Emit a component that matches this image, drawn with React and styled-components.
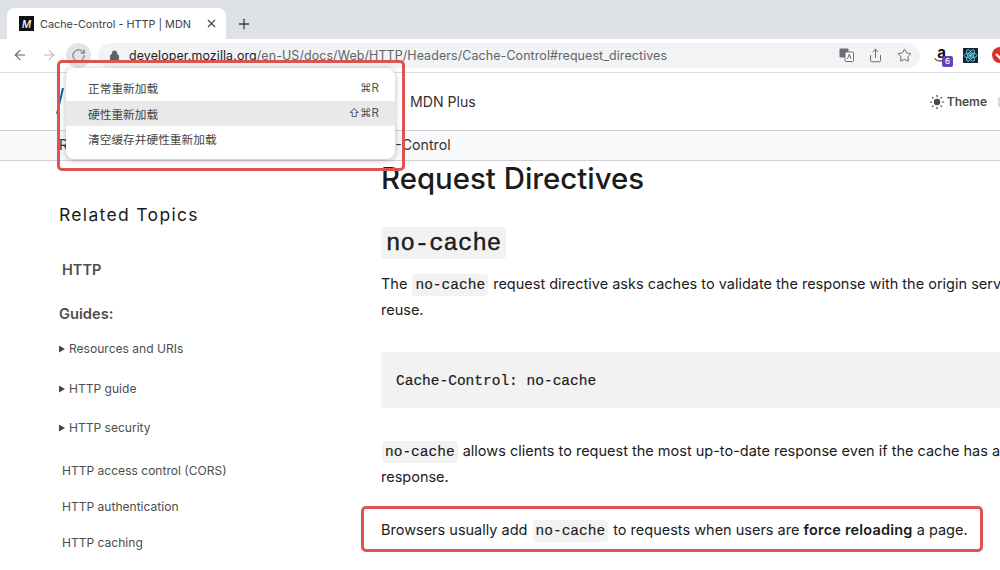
import React from "react";
import styled, { createGlobalStyle } from "styled-components";
import { ArrowLeft, ArrowRight, RotateCw, Lock, Share, Star, X, Plus, Sun } from "lucide-react";

const Global = createGlobalStyle`
  html, body { margin: 0; padding: 0; background: #fff; }
  * { box-sizing: border-box; }
  body { font-family: Inter, "Noto Sans CJK SC", sans-serif; color: #1b1b1b; }
`;

const Page = styled.div`
  position: relative;
  width: 1000px;
  height: 570px;
  overflow: hidden;
  background: #fff;
`;

const TabStrip = styled.div`
  height: 39px;
  background: #dee1e6;
  display: flex;
  align-items: flex-end;
  padding-left: 7px;
`;

const Tab = styled.div`
  width: 219px;
  height: 31px;
  background: #fff;
  border-radius: 8px 8px 0 0;
  display: flex;
  align-items: center;
  padding: 0 8px 0 12px;
  font-size: 10.85px;
  color: #3c4043;
`;

const Favicon = styled.div`
  width: 15px;
  height: 15px;
  background: #111;
  color: #fff;
  font-size: 10px;
  font-weight: 500;
  font-style: italic;
  display: flex;
  align-items: center;
  justify-content: center;
  margin-right: 6px;
`;

const TabTitle = styled.span`
  flex: 1;
  white-space: nowrap;
`;

const NewTab = styled.div`
  margin: 0 0 7px 10px;
  display: flex;
  color: #3c4043;
`;

const Toolbar = styled.div`
  height: 34px;
  display: flex;
  align-items: center;
  padding: 0 0 1px 12px;
  border-bottom: 1px solid #dcdde0;
  overflow: hidden;
`;

const NavButton = styled.div`
  width: 16px;
  flex-shrink: 0;
  display: flex;
  justify-content: center;
  margin-right: ${(p) => p.$gap}px;
  color: ${(p) => p.$color};
`;

const ReloadButton = styled.div`
  width: 25px;
  height: 25px;
  flex-shrink: 0;
  border-radius: 50%;
  background: #e3e4e6;
  color: #5f6368;
  display: flex;
  align-items: center;
  justify-content: center;
  margin-right: 7px;
`;

const AddressBar = styled.div`
  width: 822px;
  height: 25px;
  border-radius: 13px;
  background: #f1f3f4;
  display: flex;
  align-items: center;
  padding: 0 8px 0 11px;
  color: #5f6368;
  flex-shrink: 0;
`;

const Url = styled.div`
  flex: 1;
  margin-left: 9px;
  font-size: 12.45px;
  letter-spacing: 0.1px;
  white-space: nowrap;
  color: #5f6368;
`;

const Host = styled.span`
  color: #202124;
`;

const AddressIcons = styled.div`
  display: flex;
  align-items: center;
  gap: 14px;
`;

const TranslateIcon = styled.div`
  width: 15px;
  height: 14px;
  display: flex;
`;

const Extensions = styled.div`
  display: flex;
  align-items: center;
  margin-left: 14px;
  gap: 14px;
  flex-shrink: 0;
`;

const AmazonIcon = styled.div`
  position: relative;
  width: 15px;
  height: 22px;
  flex-shrink: 0;
  font-size: 15px;
  font-weight: 700;
  line-height: 17px;
  text-align: center;
  color: #111;
`;

const Smile = styled.svg`
  position: absolute;
  left: 0;
  top: 13px;
`;

const Badge = styled.span`
  position: absolute;
  left: 8px;
  top: 12px;
  width: 11px;
  height: 11px;
  background: #6741b8;
  border-radius: 2px;
  color: #fff;
  font-size: 8px;
  line-height: 11px;
  font-weight: 500;
`;

const ReactIcon = styled.div`
  width: 15px;
  height: 15px;
  flex-shrink: 0;
  background: #16242c;
  display: flex;
`;

const RedIcon = styled.div`
  width: 16px;
  height: 16px;
  flex-shrink: 0;
  display: flex;
`;

const SiteNav = styled.div`
  height: 58px;
  border-bottom: 1px solid #d0d0d4;
  display: flex;
  align-items: center;
  padding-left: 410px;
  font-size: 14.1px;
  color: #333;
`;

const NavLink = styled.span`
  flex: 1;
  white-space: nowrap;
`;

const ThemeButton = styled.div`
  display: flex;
  align-items: center;
  gap: 2px;
  margin-right: 11px;
  font-size: 12px;
  font-weight: 600;
  color: #4a4a4a;
`;

const ClippedButton = styled.div`
  width: 2px;
  height: 10px;
  background: #dcdcdc;
`;

const Logo = styled.svg`
  position: absolute;
  left: 56px;
  top: 88px;
`;

const Crumbs = styled.div`
  height: 30px;
  padding-bottom: 2px;
  background: #f8f9fa;
  border-bottom: 1px solid #d0d0d4;
  display: flex;
  align-items: center;
  font-size: 14.2px;
  color: #333;
  padding-left: 59px;
  white-space: nowrap;
`;

const CrumbTail = styled.span`
  margin-left: 327px;
`;

const Columns = styled.div`
  display: flex;
`;

const Sidebar = styled.aside`
  width: 381px;
  flex-shrink: 0;
  padding: 43px 0 0 59px;
  color: #4e4e4e;
`;

const SideTitle = styled.div`
  font-size: 17.5px;
  line-height: 22px;
  letter-spacing: 1.33px;
  color: #1b1b1b;
  margin-bottom: 34px;
`;

const SideHeading = styled.div`
  font-size: ${(p) => p.$size}px;
  font-weight: 600;
  line-height: 20px;
  padding-left: ${(p) => p.$indent}px;
  margin-bottom: ${(p) => p.$after}px;
`;

const SideItem = styled.div`
  display: flex;
  align-items: center;
  font-size: 12.05px;
  line-height: 18px;
  height: 18px;
  padding-left: ${(p) => (p.$arrow ? 0 : 3)}px;
  margin-bottom: ${(p) => p.$after}px;
  white-space: nowrap;
`;

const Arrow = styled.span`
  flex-shrink: 0;
  width: 6px;
  height: 7px;
  background: #444;
  clip-path: polygon(0 0, 100% 50%, 0 100%);
  margin-right: 4px;
`;

const Content = styled.main`
  flex: 1;
  min-width: 0;
  overflow: hidden;
  white-space: nowrap;
`;

const Title = styled.h1`
  margin: 0 0 31px;
  font-size: 29.4px;
  line-height: 35px;
  font-weight: 500;
  color: #1b1b1b;
`;

const SectionCode = styled.h2`
  display: inline-block;
  margin: 0 0 12px;
  padding: 0 5px;
  height: 32px;
  background: #f2f2f2;
  border-radius: 4px;
  font-family: "Liberation Mono", monospace;
  font-size: 24px;
  line-height: 33px;
  font-weight: 400;
  -webkit-text-stroke: 0.4px #1b1b1b;
`;

const Text = styled.p`
  margin: 0;
  font-size: 14.5px;
  line-height: 26px;
  color: #1b1b1b;
`;

const Code = styled.code`
  padding: 3px 3px;
  margin: 0 1px;
  line-height: 1;
  background: #f2f2f2;
  border-radius: 4px;
  font-family: "Liberation Mono", monospace;
  font-size: 14.5px;
  -webkit-text-stroke: 0.15px #1b1b1b;
`;

const CodeBlock = styled.pre`
  margin: 29px 0 30px;
  height: 56px;
  padding-left: 15px;
  background: #f2f2f2;
  border-radius: 4px 0 0 4px;
  font-family: "Liberation Mono", monospace;
  font-size: 14.5px;
  line-height: 58px;
  color: #1b1b1b;
  -webkit-text-stroke: 0.2px #1b1b1b;
`;

const LastText = styled(Text)`
  margin-top: 27px;
`;

const Strong = styled.strong`
  font-weight: 600;
  letter-spacing: 0.2px;
`;

const ReloadMenu = styled.div`
  position: absolute;
  left: 66px;
  top: 68px;
  width: 329px;
  height: 91px;
  padding-top: 7px;
  background: #fff;
  border-radius: 8px;
  box-shadow: 0 1px 6px rgba(0, 0, 0, 0.28);
`;

const MenuRow = styled.div`
  height: 25.5px;
  display: flex;
  align-items: center;
  justify-content: space-between;
  padding: 0 16px 0 22px;
  font-size: 11.7px;
  color: #444;
  background: ${(p) => (p.$active ? "#e9e9e9" : "transparent")};
`;

const Shortcut = styled.span`
  font-size: 11.5px;
  color: #555;
`;

const Callout = styled.div`
  position: absolute;
  left: ${(p) => p.$left}px;
  top: ${(p) => p.$top}px;
  width: ${(p) => p.$width}px;
  height: ${(p) => p.$height}px;
  border: 3.5px solid #dd5350;
  border-radius: 5px;
  pointer-events: none;
`;

const guides = [
  { label: "Resources and URIs", after: 22 },
  { label: "HTTP guide", after: 21 },
  { label: "HTTP security", after: 25 },
];

const links = [
  { label: "HTTP access control (CORS)", after: 18 },
  { label: "HTTP authentication", after: 18 },
  { label: "HTTP caching", after: 0 },
];

const menuItems = [
  { label: "正常重新加载", keys: "⌘R" },
  { label: "硬性重新加载", keys: "⇧⌘R", active: true },
  { label: "清空缓存并硬性重新加载", keys: "" },
];

export default function App() {
  return (
    <Page>
      <Global />
      <TabStrip>
        <Tab>
          <Favicon>M</Favicon>
          <TabTitle>Cache-Control - HTTP | MDN</TabTitle>
          <X size={13} strokeWidth={2} />
        </Tab>
        <NewTab>
          <Plus size={16} strokeWidth={2} />
        </NewTab>
      </TabStrip>
      <Toolbar>
        <NavButton $gap={13} $color="#5f6368">
          <ArrowLeft size={16} strokeWidth={1.6} />
        </NavButton>
        <NavButton $gap={9} $color="#b9bcc0">
          <ArrowRight size={16} strokeWidth={1.6} />
        </NavButton>
        <ReloadButton>
          <RotateCw size={15} strokeWidth={1.6} />
        </ReloadButton>
        <AddressBar>
          <Lock size={11} fill="#5f6368" />
          <Url>
            <Host>developer.mozilla.org</Host>/en-US/docs/Web/HTTP/Headers/Cache-Control#request_directives
          </Url>
          <AddressIcons>
            <TranslateIcon>
              <svg width="15" height="14" viewBox="0 0 15 14">
                <rect x="0.5" y="0.5" width="9" height="9" rx="1" fill="#6b6f74" />
                <rect x="6" y="4" width="8.5" height="9.5" rx="1" fill="#fff" stroke="#6b6f74" />
                <path d="M8.5 11l1.8-5 1.8 5" fill="none" stroke="#6b6f74" />
              </svg>
            </TranslateIcon>
            <Share size={15} strokeWidth={1.5} />
            <Star size={15} strokeWidth={1.5} />
          </AddressIcons>
        </AddressBar>
        <Extensions>
          <AmazonIcon>
            a
            <Smile width="10" height="6" viewBox="0 0 10 6">
              <path d="M0.5 1.5C3 4 6 4.5 9 3.5" fill="none" stroke="#111" strokeWidth="1" />
            </Smile>
            <Badge>6</Badge>
          </AmazonIcon>
          <ReactIcon>
            <svg width="15" height="15" viewBox="0 0 14 14" fill="none" stroke="#61dafb" strokeWidth="0.8">
              <ellipse cx="7" cy="7" rx="6" ry="2.4" />
              <ellipse cx="7" cy="7" rx="6" ry="2.4" transform="rotate(60 7 7)" />
              <ellipse cx="7" cy="7" rx="6" ry="2.4" transform="rotate(120 7 7)" />
              <circle cx="7" cy="7" r="1.1" fill="#61dafb" />
            </svg>
          </ReactIcon>
          <RedIcon>
            <svg width="16" height="16" viewBox="0 0 16 16">
              <circle cx="8" cy="8" r="8" fill="#d93025" />
              <path d="M4 7l4 4 4-6" fill="none" stroke="#fff" strokeWidth="2.4" />
            </svg>
          </RedIcon>
        </Extensions>
      </Toolbar>
      <SiteNav>
        <NavLink>MDN Plus</NavLink>
        <ThemeButton>
          <Sun size={16} fill="#4a4a4a" strokeWidth={1.6} />
          Theme
        </ThemeButton>
        <ClippedButton />
      </SiteNav>
      <Logo width="8" height="26" viewBox="0 0 8 26">
        <path d="M7 0L1 26" stroke="#1f5fae" strokeWidth="2" />
      </Logo>
      <Crumbs>
        R<CrumbTail>-Control</CrumbTail>
      </Crumbs>
      <Columns>
        <Sidebar>
          <SideTitle>Related Topics</SideTitle>
          <SideHeading $size={14.5} $indent={3} $after={24}>
            HTTP
          </SideHeading>
          <SideHeading $size={14.7} $indent={0} $after={16}>
            Guides:
          </SideHeading>
          {guides.map((g) => (
            <SideItem key={g.label} $arrow $after={g.after}>
              <Arrow />
              {g.label}
            </SideItem>
          ))}
          {links.map((l) => (
            <SideItem key={l.label} $after={l.after}>
              {l.label}
            </SideItem>
          ))}
        </Sidebar>
        <Content>
          <Title>Request Directives</Title>
          <SectionCode>no-cache</SectionCode>
          <Text>
            The <Code>no-cache</Code> request directive asks caches to validate the response with the origin server before
            <br />
            reuse.
          </Text>
          <CodeBlock>Cache-Control: no-cache</CodeBlock>
          <Text>
            <Code>no-cache</Code> allows clients to request the most up-to-date response even if the cache has a fresh
            <br />
            response.
          </Text>
          <LastText>
            Browsers usually add <Code>no-cache</Code> to requests when users are <Strong>force reloading</Strong> a page.
          </LastText>
        </Content>
      </Columns>
      <ReloadMenu>
        {menuItems.map((m) => (
          <MenuRow key={m.label} $active={m.active}>
            {m.label}
            <Shortcut>{m.keys}</Shortcut>
          </MenuRow>
        ))}
      </ReloadMenu>
      <Callout $left={57} $top={60} $width={348} $height={111} />
      <Callout $left={361} $top={506} $width={622} $height={46} />
    </Page>
  );
}
